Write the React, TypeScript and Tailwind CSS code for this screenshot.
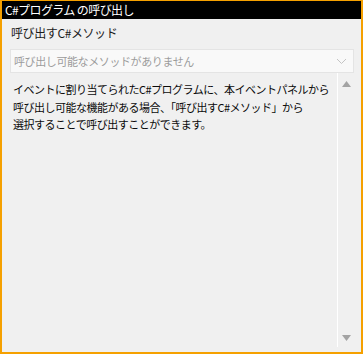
import React from "react";

const font = { fontFamily: '"Noto Sans CJK JP", "Noto Sans", sans-serif' };

export default function App() {
  return (
    <div
      className="w-[363px] h-[354px] bg-[#f0f0f0] border-[#f5a000] border-2 border-t-[1px] flex flex-col overflow-hidden"
      style={font}
    >
      <div className="h-[18px] bg-black text-white text-[12px] leading-[18px] pl-[3px] tracking-[-0.6px] whitespace-nowrap">
        C#プログラム の呼び出し
      </div>
      <div className="flex-1 flex flex-col pl-[8px] pr-[7px] min-h-0">
        <div className="h-[30px] pl-[1px] pt-[4px] text-[12px] leading-[20px] text-[#1a1a1a] tracking-[-0.4px] whitespace-nowrap">
          呼び出すC#メソッド
        </div>
        <div className="h-[24px] bg-[#f9f9f9] border border-[#e4e4e4] flex items-center justify-between pl-[3px] pr-[6px]">
          <span className="text-[11px] text-[#9c9c9c] tracking-[-0.4px] whitespace-nowrap">
            呼び出し可能なメソッドがありません
          </span>
          <svg width="11" height="7" viewBox="0 0 11 7">
            <path d="M1 1 L5.5 5.5 L10 1" fill="none" stroke="#c4c4c4" strokeWidth="1" />
          </svg>
        </div>
        <div className="flex-1 flex min-h-0 mb-[5px]">
          <div className="flex-1 pl-[3px] pt-[8px] text-[11px] leading-[17.5px] text-[#0a0a0a] tracking-[-0.5px] whitespace-nowrap">
            イベントに割り当てられたC#プログラムに、本イベントパネルから
            <br />
            呼び出し可能な機能がある場合、「呼び出すC#メソッド」から
            <br />
            選択することで呼び出すことができます。
          </div>
          <div className="w-[17px] border-l border-white flex flex-col justify-between items-center pt-[8px] pb-[6px] pl-[1px]">
            <svg width="9" height="6" viewBox="0 0 9 6">
              <path d="M4.5 0 L9 6 L0 6 Z" fill="#a3a3a3" />
            </svg>
            <svg width="9" height="6" viewBox="0 0 9 6">
              <path d="M0 0 L9 0 L4.5 6 Z" fill="#a3a3a3" />
            </svg>
          </div>
        </div>
      </div>
    </div>
  );
}
